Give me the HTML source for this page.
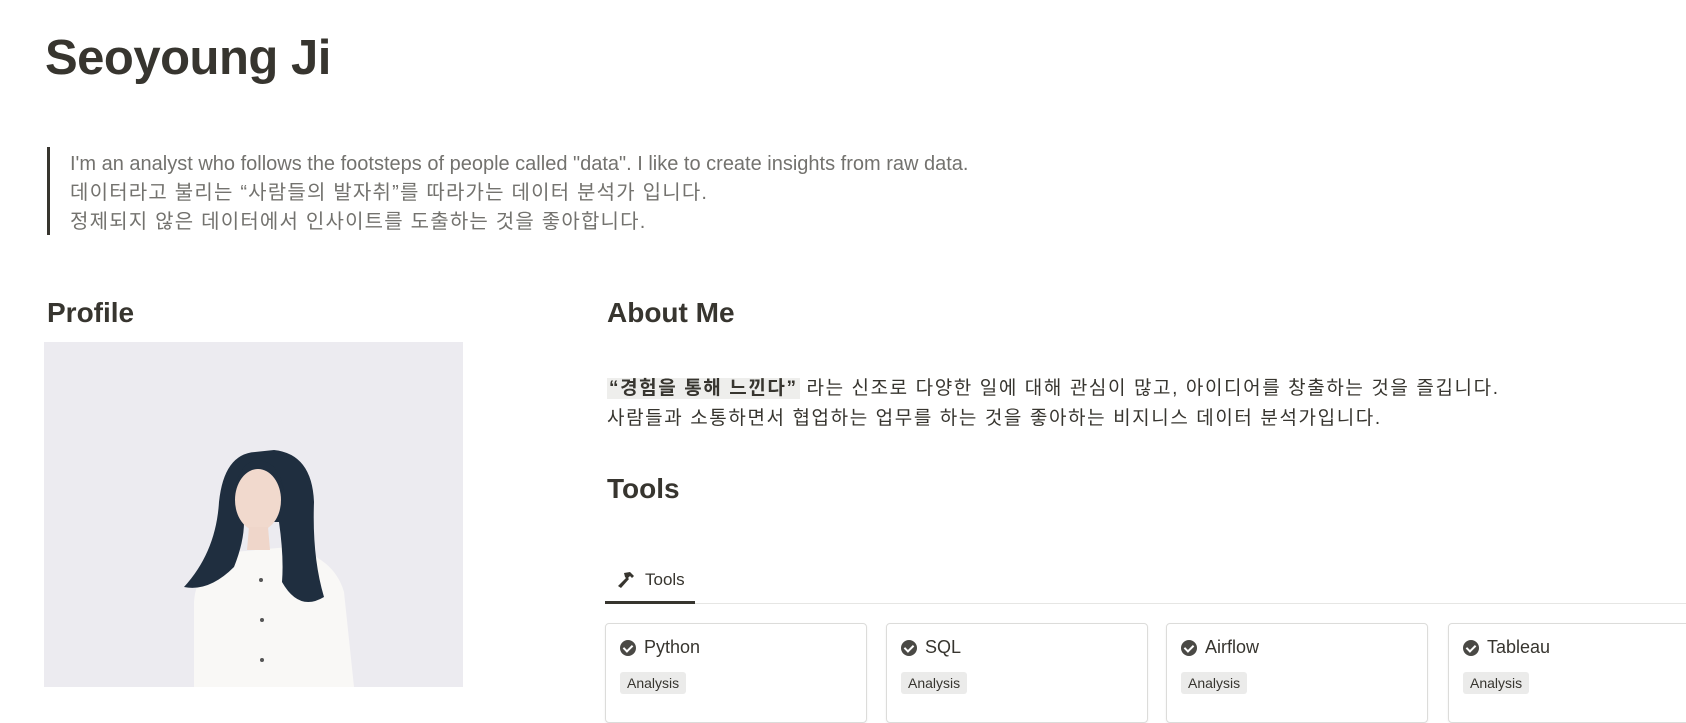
<!DOCTYPE html>
<html><head><meta charset="utf-8"><style>
*{margin:0;padding:0;box-sizing:border-box}
body{width:1686px;height:687px;overflow:hidden;background:#fff;color:#37352f;font-family:"Liberation Sans","Noto Sans CJK KR",sans-serif;position:relative}
.a{position:absolute;white-space:nowrap}
h1{font-size:49px;font-weight:bold;left:45px;top:30px;letter-spacing:-0.5px}
.bq{left:47px;top:147px;width:3px;height:88px;background:#37352f}
.q{left:70px;font-size:20px;color:#73726e;line-height:29px;top:150px}
.k{letter-spacing:1.2px}
h2{font-size:28px;font-weight:600;}
.p{font-size:19px;line-height:30px;left:607px;top:374px;color:#37352f;letter-spacing:1.6px}
.hl{background:#eeeeec;font-weight:bold;padding:0 2px}
.card{position:absolute;top:623px;width:262px;height:100px;border:1px solid #dcdcda;border-radius:4px;box-shadow:0 1px 2px rgba(0,0,0,.06)}
.card .t{position:absolute;left:14px;top:13px;font-size:18px;display:flex;align-items:center;gap:8px}
.card .tag{position:absolute;left:14px;top:48px;background:#ebebea;border-radius:3px;font-size:14px;padding:3px 7px;color:#37352f}
.ic{width:16px;height:16px;border-radius:50%;background:#4a4945;display:inline-block;position:relative}
.ic:after{content:"";position:absolute;left:5px;top:3px;width:4px;height:7px;border:solid #fff;border-width:0 2px 2px 0;transform:rotate(45deg)}
</style></head><body>
<h1 class="a">Seoyoung Ji</h1>
<div class="a bq"></div>
<div class="a q">I'm an analyst who follows the footsteps of people called "data". I like to create insights from raw data.<br><span class="k">데이터라고 불리는 “사람들의 발자취”를 따라가는 데이터 분석가 입니다.</span><br><span class="k">정제되지 않은 데이터에서 인사이트를 도출하는 것을 좋아합니다.</span></div>
<h2 class="a" style="left:47px;top:297px">Profile</h2>
<div class="a" style="left:44px;top:342px;width:419px;height:345px;background:#ecebf0;overflow:hidden">
<svg width="419" height="345" viewBox="0 0 419 345">
<path d="M150 345 L150 260 Q152 225 190 210 L245 205 Q290 215 300 250 L310 345 Z" fill="#f9f8f6"/>
<path d="M211 110 Q180 112 175 160 Q172 210 140 245 Q165 250 190 225 Q200 200 200 180 L235 180 Q240 215 238 240 Q255 270 280 255 Q268 215 270 160 Q268 112 230 108 Z" fill="#1f2e3f"/>
<ellipse cx="214" cy="158" rx="23" ry="31" fill="#f1d9cd"/>
<path d="M190 150 Q195 120 214 118 Q236 120 240 150 Q236 128 214 126 Q195 128 190 150 Z" fill="#1f2e3f"/>
<path d="M205 185 L224 185 L226 208 L203 208 Z" fill="#efd6ca"/>
<circle cx="217" cy="238" r="2" fill="#555"/><circle cx="218" cy="278" r="2" fill="#555"/><circle cx="218" cy="318" r="2" fill="#555"/>
</svg></div>
<h2 class="a" style="left:607px;top:297px">About Me</h2>
<div class="a p"><span class="hl">“경험을 통해 느낀다”</span> 라는 신조로 다양한 일에 대해 관심이 많고, 아이디어를 창출하는 것을 즐깁니다.<br>사람들과 소통하면서 협업하는 업무를 하는 것을 좋아하는 비지니스 데이터 분석가입니다.</div>
<h2 class="a" style="left:607px;top:473px">Tools</h2>
<div class="a" style="left:605px;top:603px;width:1081px;height:1px;background:#e6e6e4"></div>
<div class="a" style="left:605px;top:601px;width:90px;height:3px;background:#37352f"></div>
<div class="a" style="left:617px;top:570px;font-size:17px;display:flex;align-items:center;gap:8px">
<svg width="20" height="18" viewBox="0 0 20 18"><path d="M7 2 L13 1 L17 5 L15 7 L13 5 L11 7 L12 8 L4 17 L1 15 L9 7 L8 6 Z" fill="#37352f"/></svg>Tools</div>
<div class="card" style="left:605px"><div class="t"><span class="ic"></span>Python</div><div class="tag">Analysis</div></div>
<div class="card" style="left:886px"><div class="t"><span class="ic"></span>SQL</div><div class="tag">Analysis</div></div>
<div class="card" style="left:1166px"><div class="t"><span class="ic"></span>Airflow</div><div class="tag">Analysis</div></div>
<div class="card" style="left:1448px"><div class="t"><span class="ic"></span>Tableau</div><div class="tag">Analysis</div></div>
</body></html>
